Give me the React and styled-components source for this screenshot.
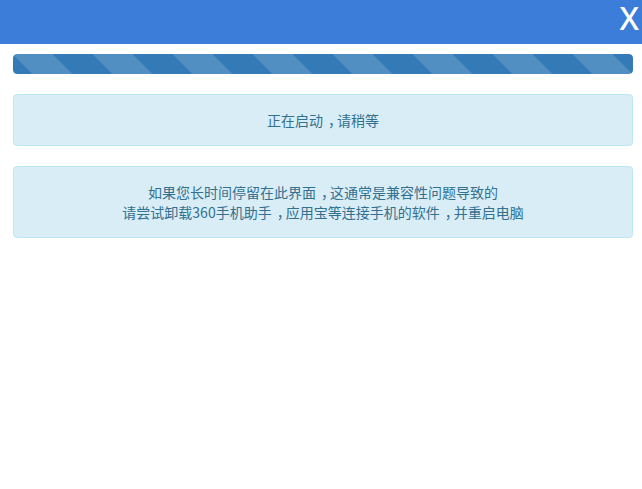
import React from "react";
import styled, { createGlobalStyle } from "styled-components";

const Global = createGlobalStyle`
  html, body { margin: 0; padding: 0; background: #fff; }
  body { font-family: "Noto Sans CJK SC", "Noto Sans", sans-serif; }
`;

const Header = styled.header`
  height: 44px;
  background: #3b7dd9;
  display: flex;
  justify-content: flex-end;
  align-items: flex-start;
`;

const Close = styled.button`
  border: 0;
  background: transparent;
  color: #fff;
  font-family: "Noto Sans", "Liberation Sans", sans-serif;
  font-weight: 500;
  font-size: 32px;
  line-height: 34px;
  padding: 1px 3px 0 0;
  margin: 0;
  cursor: pointer;
`;

const Body = styled.main`
  padding: 10px 9px 0 13px;
`;

const Progress = styled.div`
  height: 20px;
  margin-bottom: 20px;
  border-radius: 4px;
  background: #f5f5f5;
  overflow: hidden;
`;

const Bar = styled.div`
  height: 100%;
  border-radius: 4px;
  background-color: #337ab7;
  background-image: linear-gradient(
    45deg,
    rgba(255, 255, 255, 0.15) 25%,
    transparent 25%,
    transparent 50%,
    rgba(255, 255, 255, 0.15) 50%,
    rgba(255, 255, 255, 0.15) 75%,
    transparent 75%,
    transparent
  );
  background-size: 80px 80px;
`;

const Alert = styled.div`
  padding: 15px;
  margin-bottom: 20px;
  border: 1px solid #bce8f1;
  border-radius: 4px;
  background: #d9edf7;
  color: #31708f;
  font-size: 14px;
  line-height: 20px;
  text-align: center;
`;

const Comma = styled.span`
  padding-left: 5px;
  letter-spacing: -5px;
`;

export default function App() {
  return (
    <>
      <Global />
      <Header>
        <Close>X</Close>
      </Header>
      <Body>
        <Progress>
          <Bar />
        </Progress>
        <Alert>正在启动<Comma>，</Comma>请稍等</Alert>
        <Alert>
          如果您长时间停留在此界面<Comma>，</Comma>这通常是兼容性问题导致的
          <br />
          请尝试卸载360手机助手<Comma>，</Comma>应用宝等连接手机的软件<Comma>，</Comma>并重启电脑
        </Alert>
      </Body>
    </>
  );
}
